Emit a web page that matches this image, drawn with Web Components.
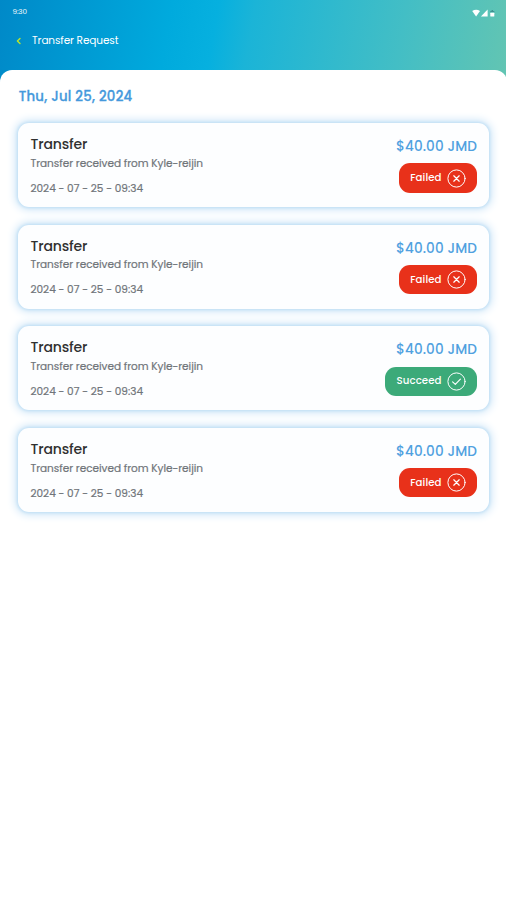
<!DOCTYPE html>
<html lang="en">
<head>
<meta charset="utf-8">
<title>Transfer Request</title>
<style>
body{margin:0;background:#fff;font-family:Poppins,Inter,"Open Sans",sans-serif;font-feature-settings:"cv11";overflow:hidden}
</style>
</head>
<body>
<transfer-app></transfer-app>
<script>
// A single line of text whose letter spacing is adjusted to fill the "w" width.
class FitText extends HTMLElement{
  connectedCallback(){
    const r=this.attachShadow({mode:'open'});
    r.innerHTML='<style>:host{display:block;white-space:nowrap;width:max-content}span{display:inline-block}</style><span></span>';
    const s=r.querySelector('span');
    s.textContent=this.getAttribute('text');
    const w=parseFloat(this.getAttribute('w')),n=s.textContent.length;
    const d=(w-s.getBoundingClientRect().width)/(n-1);
    s.style.letterSpacing=d+'px';
    s.style.marginRight=-d+'px';
  }
}
customElements.define('fit-text',FitText);

class StatusBadge extends HTMLElement{
  connectedCallback(){
    const ok=this.getAttribute('status')==='Succeed';
    this.attachShadow({mode:'open'}).innerHTML=`<style>
:host{display:flex;align-items:center;gap:5.5px;box-sizing:border-box;height:29.3px;padding:0 11px 0 11.3px;border-radius:11px;color:#fff;font-size:10.2px;font-weight:500;line-height:16px;background:${ok?'#3caa79':'#e8311a'}}
svg{display:block;width:19px;height:19px}</style>
<fit-text text="${ok?'Succeed':'Failed'}" w="${ok?45:31.3}"></fit-text>
<svg viewBox="0 0 19 19" fill="none" stroke="#fff" stroke-linecap="round" stroke-linejoin="round"><circle cx="9.5" cy="9.5" r="8.6" stroke-width="1"/>${ok?'<path d="M5.6 9.8l2.7 2.5 5.1-5.2" stroke-width="1.15"/>':'<path d="M6.8 6.8l5.4 5.4M12.2 6.8l-5.4 5.4" stroke-width="1.25"/>'}</svg>`;
  }
}
customElements.define('status-badge',StatusBadge);

class TransferCard extends HTMLElement{
  connectedCallback(){
    this.attachShadow({mode:'open'}).innerHTML=`<style>
:host{display:flex;justify-content:space-between;box-sizing:border-box;height:84px;padding:11px 12px 0 12.5px;border-radius:11px;background:#fdfeff;box-shadow:0 0 3px 1px #c0dff5,0 0 8px 3px #d0e7f8}
.l,.r{display:flex;flex-direction:column}
.r{align-items:flex-end;padding-top:2.2px}
.t{font-size:14px;font-weight:500;line-height:20px;color:#303030}
.s,.d{font-size:10.5px;line-height:16px;color:#70757a;-webkit-text-stroke:.2px #70757a}
.s{margin-top:1.8px}
.d{margin-top:9px}
.a{font-size:13.6px;font-weight:500;line-height:21px;color:#50a1df;margin-bottom:6.2px}
</style>
<div class="l"><fit-text class="t" text="Transfer" w="57"></fit-text>
<fit-text class="s" text="Transfer received from Kyle-reijin" w="172.5"></fit-text>
<fit-text class="d" text="2024 - 07 - 25 - 09:34" w="112.5"></fit-text></div>
<div class="r"><fit-text class="a" text="$40.00 JMD" w="81"></fit-text><status-badge status="${this.getAttribute('status')}"></status-badge></div>`;
  }
}
customElements.define('transfer-card',TransferCard);

class AppHeader extends HTMLElement{
  connectedCallback(){
    this.attachShadow({mode:'open'}).innerHTML=`<style>
:host{display:block;box-sizing:border-box;height:95px;margin-right:1px;color:#fff;background:linear-gradient(100deg,#0089c8 0%,#00aadd 33%,#06b0df 42%,#1bb4d7 49%,#43bec5 78%,#63c5b2 100%)}
.bar{display:flex;justify-content:space-between;padding:7px 10px 0 12.5px;height:17px;font-size:7.2px;line-height:10px}
.bar svg{width:24px;height:9px;margin-top:1.5px}
.nav{display:flex;align-items:center;height:16px;padding:8.6px 0 0 16px;font-size:10.5px;line-height:16px}
.nav svg{width:5px;height:8px;margin-right:11px}
</style>
<div class="bar"><fit-text text="9:30" w="14.5"></fit-text>
<svg viewBox="0 0 24 9" fill="#fff"><path d="M.2 2.1Q4.1-.8 8 2.1L4.1 7.4z"/><path d="M15.6.6V7.4H8.9z"/><path d="M18.3 3h4V2H21V1h-1.4v1h-1.3z" fill="#3f8f91"/><rect x="18.3" y="3.8" width="4" height="3.6" rx=".5"/></svg></div>
<div class="nav"><svg viewBox="0 0 5 8" fill="none" stroke="#b9e52c" stroke-width="1.4" stroke-linecap="round" stroke-linejoin="round"><path d="M4 1.4L1.4 4 4 6.6"/></svg><fit-text text="Transfer Request" w="86.5"></fit-text></div>`;
  }
}
customElements.define('app-header',AppHeader);

class TransferApp extends HTMLElement{
  connectedCallback(){
    this.attachShadow({mode:'open'}).innerHTML=`<style>
:host{display:block;height:900px;overflow:hidden}
main{display:flow-root;box-sizing:border-box;height:831px;margin-top:-25px;background:#fff;border-radius:12px 12px 0 0;padding:16px 18px 0 18px}
.date{font-size:13.3px;font-weight:500;line-height:21px;color:#4599dc;margin-left:.7px;-webkit-text-stroke:.3px #4599dc}
.list{display:grid;gap:17.6px;margin-top:16px}
</style><app-header></app-header>
<main><fit-text class="date" text="Thu, Jul 25, 2024" w="113.5"></fit-text>
<div class="list"><transfer-card status="Failed"></transfer-card><transfer-card status="Failed"></transfer-card><transfer-card status="Succeed"></transfer-card><transfer-card status="Failed"></transfer-card></div></main>`;
  }
}
customElements.define('transfer-app',TransferApp);
</script>
</body>
</html>
